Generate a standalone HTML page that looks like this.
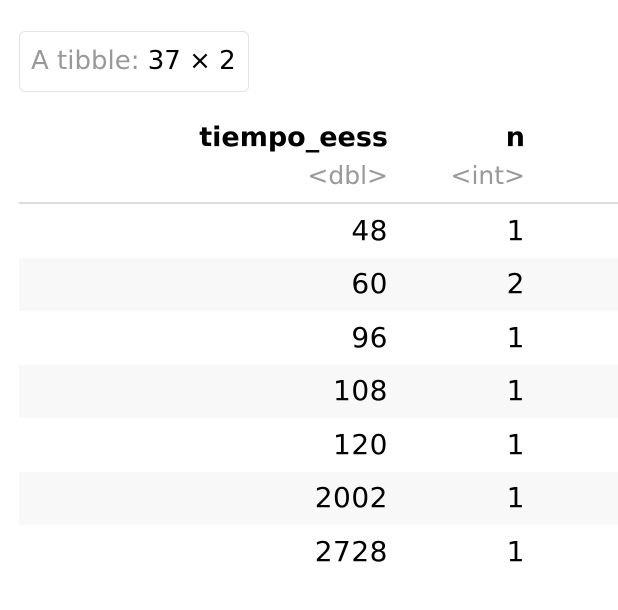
<!DOCTYPE html>
<html><head><style>
body{margin:0;width:618px;height:610px;background:#fff;font-family:"DejaVu Sans","Liberation Sans",sans-serif;position:relative;overflow:hidden}
.box{position:absolute;left:19px;top:31px;width:228px;height:59px;border:1.5px solid #e3e3e3;border-radius:6px;font-size:26px;line-height:59px;box-sizing:content-box;white-space:nowrap}
.box span.g{color:#999;padding-left:11px}
.t{position:absolute;font-size:28px;text-align:right;white-space:nowrap;letter-spacing:0.5px}
.c1{right:230px}.c2{right:93px}
.hdr{font-weight:bold;letter-spacing:0;font-size:27px}
.ty{color:#999;font-size:25px;letter-spacing:0}
.line{position:absolute;left:19px;right:0;top:202px;height:2px;background:#ddd}
.s{position:absolute;left:19px;right:0;height:53px;background:#f8f8f8}
</style></head><body>
<div class="box"><span class="g">A tibble:</span> 37 × 2</div>
<div class="t hdr c1" style="top:122px">tiempo_eess</div>
<div class="t hdr c2" style="top:122px">n</div>
<div class="t ty c1" style="top:161px">&lt;dbl&gt;</div>
<div class="t ty c2" style="top:161px">&lt;int&gt;</div>
<div class="line"></div>
<div class="s" style="top:258px"></div>
<div class="s" style="top:365px"></div>
<div class="s" style="top:472px"></div>
<div class="t c1" style="top:214px">48</div><div class="t c2" style="top:214px">1</div>
<div class="t c1" style="top:267px">60</div><div class="t c2" style="top:267px">2</div>
<div class="t c1" style="top:321px">96</div><div class="t c2" style="top:321px">1</div>
<div class="t c1" style="top:374px">108</div><div class="t c2" style="top:374px">1</div>
<div class="t c1" style="top:428px">120</div><div class="t c2" style="top:428px">1</div>
<div class="t c1" style="top:481px">2002</div><div class="t c2" style="top:481px">1</div>
<div class="t c1" style="top:535px">2728</div><div class="t c2" style="top:535px">1</div>
</body></html>
